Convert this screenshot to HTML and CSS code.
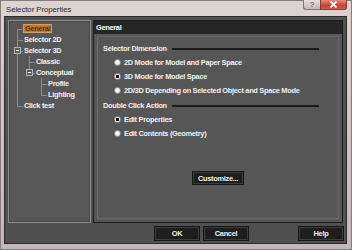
FILE: index.html
```html
<!DOCTYPE html>
<html lang="en">
<head>
    <meta charset="UTF-8">
    <title>Selector Properties</title>
    <link rel="stylesheet" href="styles.css">
</head>
<body>
    <div class="window">
        <div class="titlebar">
            <span class="title">Selector Properties</span>
            <div class="caption-btns">
                <span class="cap-btn cap-help">?</span>
                <span class="cap-btn cap-close">
                    <svg width="9" height="7" viewBox="0 0 9 7"><path d="M1.5 0.5 L7.5 6.5 M7.5 0.5 L1.5 6.5" stroke="#fff" stroke-width="1.8"/></svg>
                </span>
            </div>
        </div>
        <div class="client">
            <div class="main">
                <div class="tree-panel">
                    <ul class="tree">
                        <li><span class="node selected">General</span></li>
                        <li><span class="node">Selector 2D</span></li>
                        <li>
                            <span class="toggle"></span><span class="node">Selector 3D</span>
                            <ul>
                                <li><span class="node">Classic</span></li>
                                <li>
                                    <span class="toggle"></span><span class="node">Conceptual</span>
                                    <ul>
                                        <li><span class="node">Profile</span></li>
                                        <li><span class="node">Lighting</span></li>
                                    </ul>
                                </li>
                            </ul>
                        </li>
                        <li><span class="node">Click test</span></li>
                    </ul>
                </div>
                <div class="page">
                    <div class="page-header">General</div>
                    <div class="page-body">
                        <div class="group-label">Selector Dimension</div>
                        <label class="radio"><input type="radio" name="dim"> 2D Mode for Model and Paper Space</label>
                        <label class="radio"><input type="radio" name="dim" checked> 3D Mode for Model Space</label>
                        <label class="radio"><input type="radio" name="dim"> 2D/3D Depending on Selected Object and Space Mode</label>
                        <div class="group-label second">Double Click Action</div>
                        <label class="radio"><input type="radio" name="dbl" checked> Edit Properties</label>
                        <label class="radio"><input type="radio" name="dbl"> Edit Contents (Geometry)</label>
                        <div class="customize-row">
                            <button type="button" class="btn">Customize...</button>
                        </div>
                    </div>
                </div>
            </div>
            <div class="footer">
                <button type="button" class="btn wide">OK</button>
                <button type="button" class="btn wide">Cancel</button>
                <button type="button" class="btn wide help">Help</button>
            </div>
        </div>
    </div>
</body>
</html>
```

FILE: styles.css
```css
* {
    margin: 0;
    padding: 0;
    box-sizing: border-box;
}

body {
    width: 352px;
    height: 250px;
    overflow: hidden;
    font-family: 'Liberation Sans', Arial, sans-serif;
    background: #c9bcbd;
}

.window {
    width: 352px;
    height: 250px;
    display: flex;
    flex-direction: column;
    border: 1px solid #857a7c;
    padding: 0 4px 5px 3px;
    background: linear-gradient(180deg, #ddd3d1 0%, #d2c6c6 40%, #c6b6bb 100%);
}

/* title bar */
.titlebar {
    height: 15px;
    display: flex;
    align-items: flex-start;
}

.title {
    font-size: 7.7px;
    color: #1e1e1e;
    padding: 4px 0 0 2px;
}

.caption-btns {
    margin-left: auto;
    margin-top: -1px;
    display: flex;
}

.cap-btn {
    height: 10px;
    display: flex;
    align-items: center;
    justify-content: center;
    border: 1px solid #7d7475;
    border-top: none;
}

.cap-help {
    width: 17px;
    font-size: 8px;
    color: #444;
    background: linear-gradient(180deg, #e6e0e0, #c2b9ba);
    border-radius: 0 0 0 3px;
    border-right: none;
}

.cap-close {
    width: 27px;
    background: linear-gradient(180deg, #e58b7e, #c8432f 60%, #d45a45);
    border-color: #8a3a30;
    border-radius: 0 0 3px 0;
}

/* client area */
.client {
    flex: 1;
    display: flex;
    flex-direction: column;
    gap: 4px;
    background: #505050;
    border: 1px solid #2c2c2c;
    padding: 3px;
    font-weight: bold;
    font-size: 7.4px;
    letter-spacing: -0.3px;
    color: #f0f0f0;
}

.main {
    height: 203px;
    display: flex;
    gap: 2px;
}

/* tree */
.tree-panel {
    width: 83px;
    background: #575757;
    border: 1px solid #8e8e8e;
    box-shadow: inset 0 0 0 1px #4a4a4a;
    padding: 2px 0 0 8px;
}

.tree,
.tree ul {
    list-style: none;
}

.tree ul {
    padding-left: 5px;
}

.tree li {
    position: relative;
    padding-left: 7px;
}

.tree li::before {
    content: '';
    position: absolute;
    left: 0;
    top: 0;
    width: 5px;
    height: 6px;
    border-left: 1px solid #8c8c8c;
    border-bottom: 1px solid #8c8c8c;
}

.tree li::after {
    content: '';
    position: absolute;
    left: 0;
    top: 6px;
    bottom: 0;
    border-left: 1px solid #8c8c8c;
}

.tree > li:first-child::before {
    border-left: none;
}

.tree li:last-child::after {
    display: none;
}

.node {
    display: inline-block;
    height: 11px;
    line-height: 11px;
    white-space: nowrap;
}

.node.selected {
    margin: 1px 0 1px -1px;
    padding: 0 1px;
    height: 9px;
    line-height: 7px;
    background: #c07a30;
    border: 1px solid #e09a4c;
    color: #5a3210;
}

.toggle {
    position: absolute;
    left: -3px;
    top: 2px;
    width: 7px;
    height: 7px;
    border: 1px solid #b5b5b5;
    background: #5a5a5a;
    z-index: 1;
}

.toggle::after {
    content: '';
    position: absolute;
    left: 1px;
    top: 2px;
    width: 3px;
    height: 1px;
    background: #fff;
}

/* property page */
.page {
    flex: 1;
    display: flex;
    flex-direction: column;
    background: #565656;
    border: 1px solid #1c1c1c;
}

.page-header {
    height: 13px;
    line-height: 13px;
    padding-left: 2px;
    background: #262626;
    color: #fff;
}

.page-body {
    flex: 1;
    margin: 2px 3px 3px 3px;
    border: 1px solid #6c6c6c;
    padding: 4px 0 0 5px;
    display: flex;
    flex-direction: column;
}

.group-label {
    height: 14px;
    display: flex;
    align-items: center;
}

.group-label::after {
    content: '';
    flex: 1;
    height: 2px;
    margin: 1px 19px 0 5px;
    background: #1c1c1c;
}

.group-label.second {
    margin-top: 1px;
}

.radio {
    height: 14px;
    display: flex;
    align-items: center;
    gap: 3px;
    padding-left: 11px;
    white-space: nowrap;
}

.radio input {
    appearance: none;
    width: 7px;
    height: 7px;
    border-radius: 50%;
    border: 1px solid #9a9a9a;
    background: radial-gradient(circle at 40% 40%, #ffffff, #dcdcdc);
}

.radio input:checked {
    background: radial-gradient(circle, #111 0 1.4px, #ffffff 1.8px);
}

.customize-row {
    margin-top: 32px;
    display: flex;
    justify-content: center;
    padding-right: 5px;
}

/* buttons */
.btn {
    height: 12px;
    padding: 0 4px;
    font-family: inherit;
    font-weight: bold;
    font-size: 7.4px;
    letter-spacing: -0.3px;
    color: #f0f0f0;
    background: #1e1e1e;
    border: 1px solid #3c3c3c;
    outline: 1px solid #161616;
}

.btn.wide {
    width: 44px;
    height: 13px;
}

.footer {
    display: flex;
    justify-content: flex-end;
    gap: 5px;
}

.help {
    margin-left: 46px;
}
```
